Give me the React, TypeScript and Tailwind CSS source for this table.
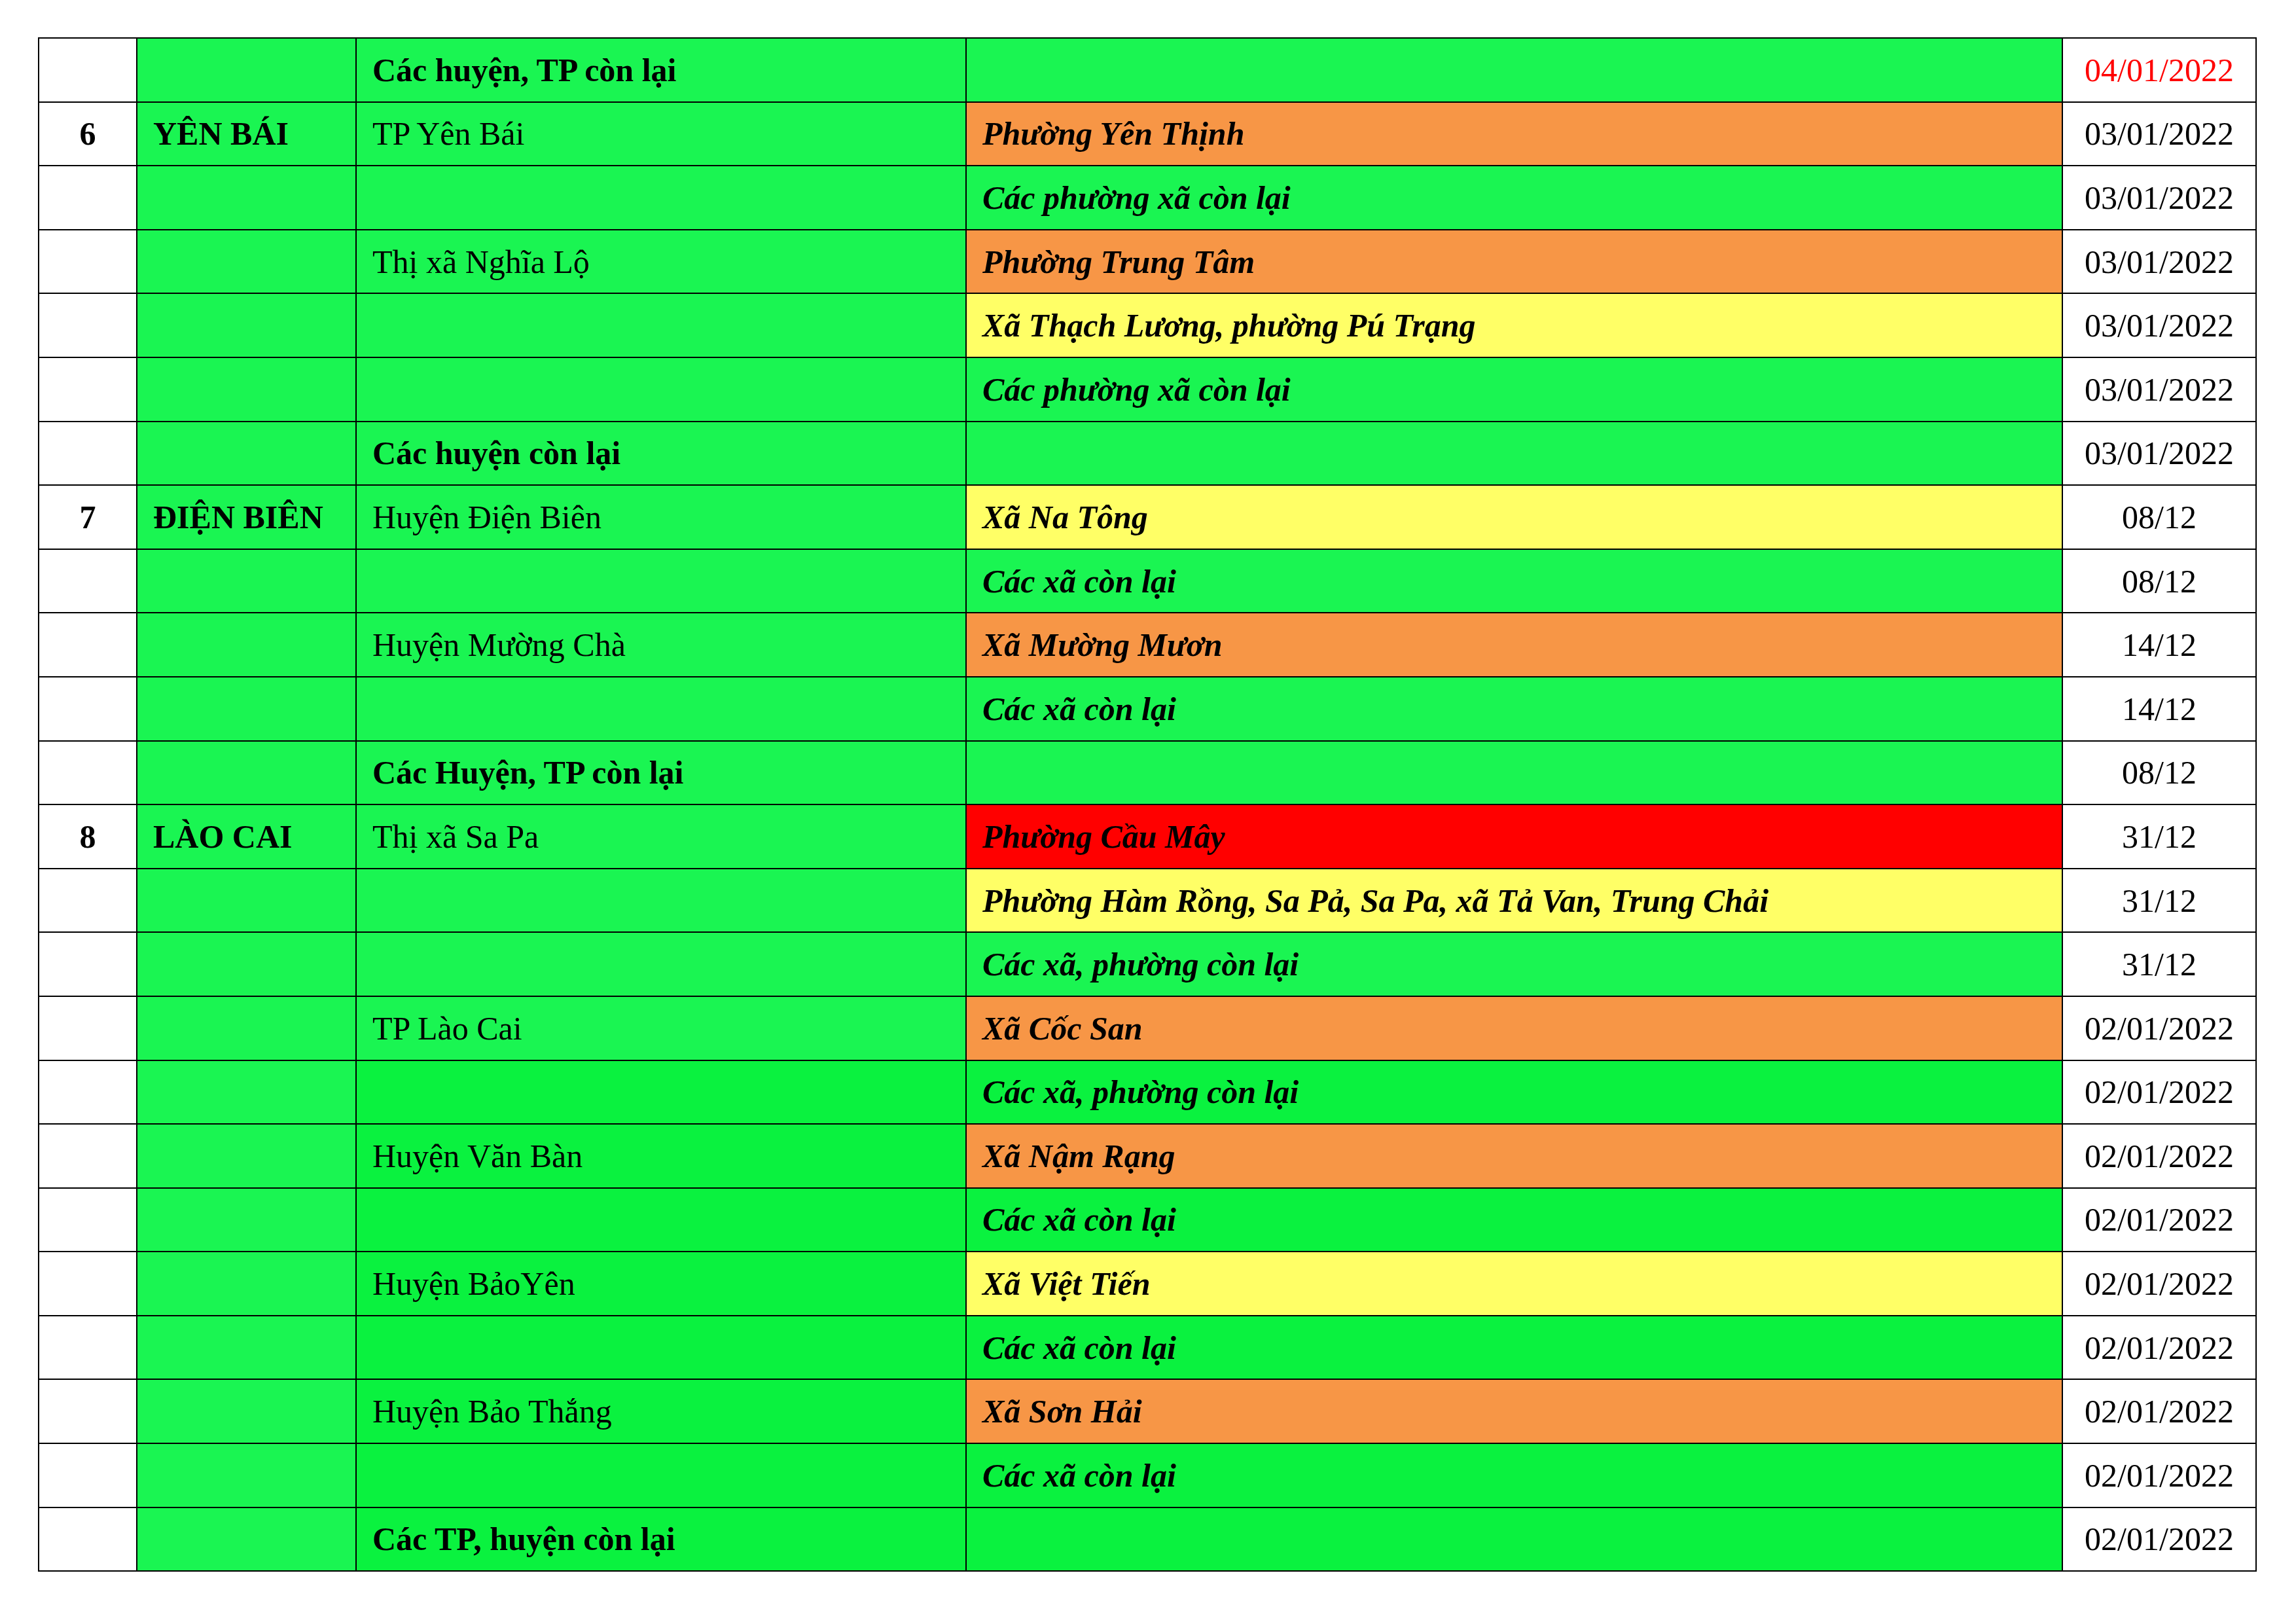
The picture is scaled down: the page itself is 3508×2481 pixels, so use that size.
type Tone = "green" | "orange" | "yellow" | "red";

type Row = {
  no?: string;
  province?: string;
  district?: string;
  districtBold?: boolean;
  ward?: string;
  tone: Tone;
  date: string;
  dateRed?: boolean;
};

const TONE_BG: Record<Tone, string> = {
  green: "bg-[#1af552]",
  orange: "bg-[#f79646]",
  yellow: "bg-[#ffff66]",
  red: "bg-[#ff0000]",
};

// rows from here on were filled with a slightly deeper green
const LATE_GREEN_FROM = 16;

const rows: Row[] = [
  { district: "Các huyện, TP còn lại", districtBold: true, tone: "green", date: "04/01/2022", dateRed: true },
  { no: "6", province: "YÊN BÁI", district: "TP Yên Bái", ward: "Phường Yên Thịnh", tone: "orange", date: "03/01/2022" },
  { ward: "Các phường xã còn lại", tone: "green", date: "03/01/2022" },
  { district: "Thị xã Nghĩa Lộ", ward: "Phường Trung Tâm", tone: "orange", date: "03/01/2022" },
  { ward: "Xã Thạch Lương, phường Pú Trạng", tone: "yellow", date: "03/01/2022" },
  { ward: "Các phường xã còn lại", tone: "green", date: "03/01/2022" },
  { district: "Các huyện còn lại", districtBold: true, tone: "green", date: "03/01/2022" },
  { no: "7", province: "ĐIỆN BIÊN", district: "Huyện Điện Biên", ward: "Xã Na Tông", tone: "yellow", date: "08/12" },
  { ward: "Các xã còn lại", tone: "green", date: "08/12" },
  { district: "Huyện Mường Chà", ward: "Xã Mường Mươn", tone: "orange", date: "14/12" },
  { ward: "Các xã còn lại", tone: "green", date: "14/12" },
  { district: "Các Huyện, TP còn lại", districtBold: true, tone: "green", date: "08/12" },
  { no: "8", province: "LÀO CAI", district: "Thị xã Sa Pa", ward: "Phường Cầu Mây", tone: "red", date: "31/12" },
  { ward: "Phường Hàm Rồng, Sa Pả, Sa Pa, xã Tả Van, Trung Chải", tone: "yellow", date: "31/12" },
  { ward: "Các xã, phường còn lại", tone: "green", date: "31/12" },
  { district: "TP Lào Cai", ward: "Xã Cốc San", tone: "orange", date: "02/01/2022" },
  { ward: "Các xã, phường còn lại", tone: "green", date: "02/01/2022" },
  { district: "Huyện Văn Bàn", ward: "Xã Nậm Rạng", tone: "orange", date: "02/01/2022" },
  { ward: "Các xã còn lại", tone: "green", date: "02/01/2022" },
  { district: "Huyện BảoYên", ward: "Xã Việt Tiến", tone: "yellow", date: "02/01/2022" },
  { ward: "Các xã còn lại", tone: "green", date: "02/01/2022" },
  { district: "Huyện Bảo Thắng", ward: "Xã Sơn Hải", tone: "orange", date: "02/01/2022" },
  { ward: "Các xã còn lại", tone: "green", date: "02/01/2022" },
  { district: "Các TP, huyện còn lại", districtBold: true, tone: "green", date: "02/01/2022" },
];

const cell = "h-[97.6px] border-r-2 border-b-2 border-black flex items-center";

export default function App() {
  return (
    <div className="w-[3508px] h-[2481px] bg-white pt-[57px] pl-[58px] font-['Liberation_Serif',serif] text-[50px] text-black leading-none">
      <div className="w-fit border-l-2 border-t-2 border-black grid grid-cols-[150px_335px_932px_1675px_296px]">
        {rows.map((r, i) => {
          const late = i >= LATE_GREEN_FROM;
          const sideBg = late ? "bg-[#0af23f]" : "bg-[#1af552]";
          const wardBg = r.tone === "green" ? sideBg : TONE_BG[r.tone];
          return (
            <div key={i} className="contents">
              <div className={`${cell} justify-center bg-white font-bold`}>{r.no}</div>
              <div className={`${cell} bg-[#1af552] pl-[24px] font-bold`}>{r.province}</div>
              <div className={`${cell} ${sideBg} pl-[24px] ${r.districtBold ? "font-bold" : ""}`}>
                {r.district}
              </div>
              <div className={`${cell} ${wardBg} pl-[24px] font-bold italic`}>{r.ward}</div>
              <div className={`${cell} justify-center bg-white ${r.dateRed ? "text-[#ff0000]" : ""}`}>
                {r.date}
              </div>
            </div>
          );
        })}
      </div>
    </div>
  );
}
